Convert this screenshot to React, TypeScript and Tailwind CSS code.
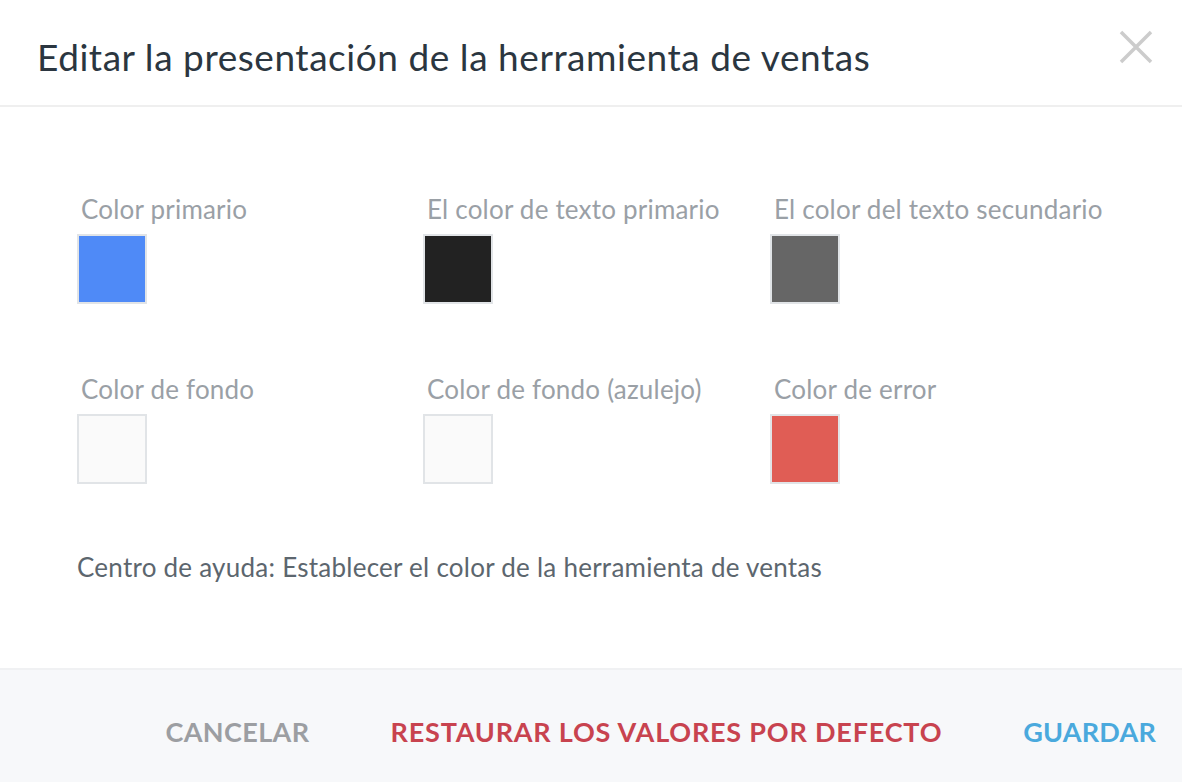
import React from "react";

type Swatch = { label: string; color: string };

const swatches: Swatch[] = [
  { label: "Color primario", color: "bg-[#4f8af7]" },
  { label: "El color de texto primario", color: "bg-[#222222]" },
  { label: "El color del texto secundario", color: "bg-[#666666]" },
  { label: "Color de fondo", color: "bg-[#fafafa]" },
  { label: "Color de fondo (azulejo)", color: "bg-[#fafafa]" },
  { label: "Color de error", color: "bg-[#e05d55]" },
];

const App: React.FC = () => {
  return (
    <div className="w-[1182px] h-[782px] flex flex-col bg-white font-['Lato','Noto_Sans',sans-serif]">
      {/* cabecera */}
      <header className="h-[107px] shrink-0 flex items-center justify-between pl-[37px] pr-[28px] pt-[8px] border-b-2 border-[#efefef]">
        <h1 className="text-[37px] leading-[44px] text-[#2b3640] tracking-[0.55px]">
          Editar la presentación de la herramienta de ventas
        </h1>
        <button className="w-[36px] h-[36px] flex items-center justify-center -mt-[20px]">
          <svg width="34" height="34" viewBox="0 0 34 34" fill="none">
            <path d="M2 2 L32 32 M32 2 L2 32" stroke="#cccccc" strokeWidth="3.5" />
          </svg>
        </button>
      </header>

      {/* selectores de color */}
      <main className="flex-1 pl-[77px] pt-[85px]">
        <div className="grid grid-cols-[346px_347px_346px] gap-y-[68px]">
          {swatches.map((s) => (
            <div key={s.label} className="flex flex-col">
              <span className="text-[26px] leading-[34px] text-[#9aa0a6] pl-[4px] tracking-[0.2px]">{s.label}</span>
              <div className={`mt-[8px] w-[70px] h-[70px] border-2 border-[#e1e4e7] ${s.color}`}></div>
            </div>
          ))}
        </div>
        <p className="mt-[66px] text-[26px] leading-[34px] text-[#5c666e] tracking-[0.25px]">
          Centro de ayuda: Establecer el color de la herramienta de ventas
        </p>
      </main>

      {/* pie con acciones */}
      <footer className="h-[114px] shrink-0 bg-[#f7f8fa] border-t-2 border-[#f0f1f3] flex items-center justify-end pr-[26px] gap-[81px] pt-[12px]">
        <button className="text-[27px] font-bold text-[#9c9ea2] tracking-[0.4px]">CANCELAR</button>
        <button className="text-[27px] font-bold text-[#c8434f] tracking-[0.8px]">RESTAURAR LOS VALORES POR DEFECTO</button>
        <button className="text-[27px] font-bold text-[#4aa9dd] tracking-[0.2px]">GUARDAR</button>
      </footer>
    </div>
  );
};

export default App;
